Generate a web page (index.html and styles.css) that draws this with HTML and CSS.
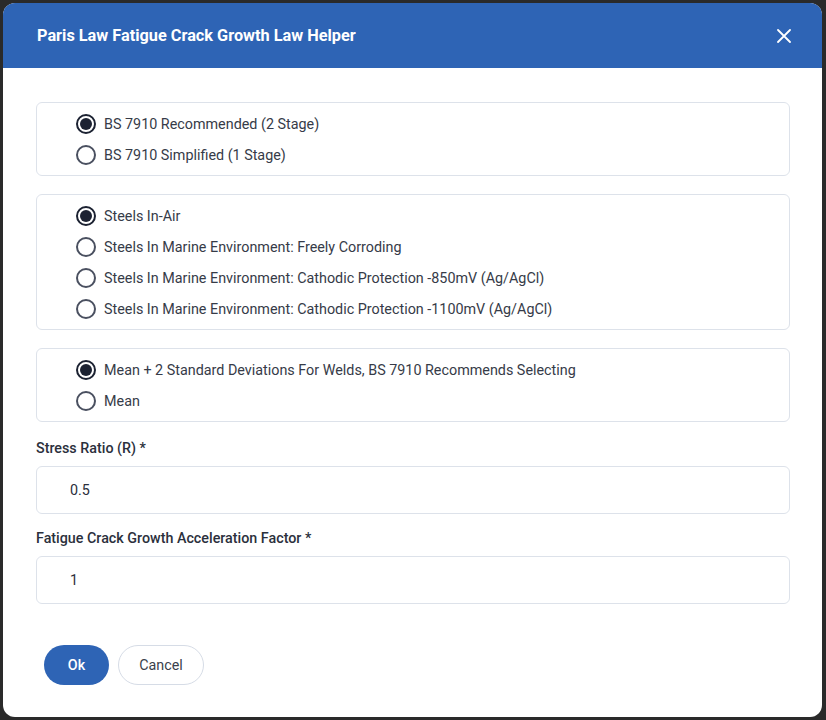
FILE: index.html
```html
<!DOCTYPE html>
<html lang="en">
<head>
    <meta charset="UTF-8">
    <meta name="viewport" content="width=device-width, initial-scale=1.0">
    <title>Paris Law Fatigue Crack Growth Law Helper</title>
    <link rel="stylesheet" href="styles.css">
</head>
<body>
    <div class="dialog">
        <div class="dialog-header">
            <h1 class="dialog-title">Paris Law Fatigue Crack Growth Law Helper</h1>
            <button class="close" aria-label="Close">
                <svg width="14" height="14" viewBox="0 0 14 14">
                    <path d="M1 1 L13 13 M13 1 L1 13" stroke="#fff" stroke-width="1.8" stroke-linecap="round"/>
                </svg>
            </button>
        </div>
        <div class="dialog-body">
            <div class="group">
                <label class="radio"><input type="radio" name="stage" checked><span>BS 7910 Recommended (2 Stage)</span></label>
                <label class="radio"><input type="radio" name="stage"><span>BS 7910 Simplified (1 Stage)</span></label>
            </div>
            <div class="group">
                <label class="radio"><input type="radio" name="env" checked><span>Steels In-Air</span></label>
                <label class="radio"><input type="radio" name="env"><span>Steels In Marine Environment: Freely Corroding</span></label>
                <label class="radio"><input type="radio" name="env"><span>Steels In Marine Environment: Cathodic Protection -850mV (Ag/AgCl)</span></label>
                <label class="radio"><input type="radio" name="env"><span>Steels In Marine Environment: Cathodic Protection -1100mV (Ag/AgCl)</span></label>
            </div>
            <div class="group">
                <label class="radio"><input type="radio" name="curve" checked><span>Mean + 2 Standard Deviations For Welds, BS 7910 Recommends Selecting</span></label>
                <label class="radio"><input type="radio" name="curve"><span>Mean</span></label>
            </div>
            <div class="field">
                <label class="field-label">Stress Ratio (R) *</label>
                <input class="text-input" type="text" value="0.5">
            </div>
            <div class="field">
                <label class="field-label">Fatigue Crack Growth Acceleration Factor *</label>
                <input class="text-input" type="text" value="1">
            </div>
            <div class="actions">
                <button class="btn btn-primary">Ok</button>
                <button class="btn btn-secondary">Cancel</button>
            </div>
        </div>
    </div>
</body>
</html>
```

FILE: styles.css
```css
* {
    box-sizing: border-box;
}
body {
    margin: 0;
    padding: 3px 4px 3px 3px;
    background-color: #2a2a2a;
    font-family: 'Roboto', 'Liberation Sans', sans-serif;
    height: 720px;
    overflow: hidden;
}
.dialog {
    width: 819px;
    height: 714px;
    background: #fff;
    border-radius: 12px;
    overflow: hidden;
}
.dialog-header {
    height: 65px;
    background: #2e64b5;
    display: flex;
    align-items: center;
    justify-content: space-between;
    padding: 0 31px 0 34px;
}
.dialog-title {
    margin: 0;
    color: #fff;
    font-size: 16.3px;
    font-weight: 700;
}
.close {
    background: none;
    border: none;
    padding: 0;
    width: 14px;
    height: 14px;
    cursor: pointer;
    display: flex;
}
.dialog-body {
    padding: 34px 32px 0 33px;
}
.group {
    border: 1px solid #dde2ea;
    border-radius: 6px;
    padding: 5px 0 5px 39px;
    margin-bottom: 18px;
}
.group:last-of-type {
    margin-bottom: 0;
}
.radio {
    display: flex;
    align-items: center;
    height: 31px;
    gap: 8px;
    font-size: 14.35px;
    color: #363b48;
    cursor: pointer;
}
.radio span {
    padding-top: 1px;
}
.radio input {
    appearance: none;
    margin: 0;
    width: 20px;
    height: 20px;
    border: 2px solid #4a5060;
    border-radius: 50%;
    display: grid;
    place-items: center;
    flex-shrink: 0;
}
.radio input:checked {
    border-color: #1c2232;
}
.radio input:checked::before {
    content: '';
    width: 12px;
    height: 12px;
    border-radius: 50%;
    background: #1c2232;
}
.field {
    margin-top: 12px;
}
.field + .field {
    margin-top: 16px;
}
.field-label {
    display: block;
    font-size: 14.3px;
    font-weight: 500;
    color: #2b303c;
    margin-bottom: 9px;
    line-height: 17px;
}
.text-input {
    width: 100%;
    height: 48px;
    border: 1px solid #dde2ea;
    border-radius: 6px;
    padding: 0 33px;
    font-family: inherit;
    font-size: 14.3px;
    color: #2b303c;
    outline: none;
}
.actions {
    display: flex;
    gap: 9px;
    margin-top: 41px;
    padding-left: 8px;
}
.btn {
    height: 40px;
    border-radius: 20px;
    font-family: inherit;
    font-size: 14.3px;
    cursor: pointer;
}
.btn-primary {
    width: 65px;
    background: #2e64b5;
    border: none;
    color: #fff;
    font-weight: 500;
}
.btn-secondary {
    width: 86px;
    background: #fff;
    border: 1px solid #d6dce6;
    color: #3a3f4b;
}
```
